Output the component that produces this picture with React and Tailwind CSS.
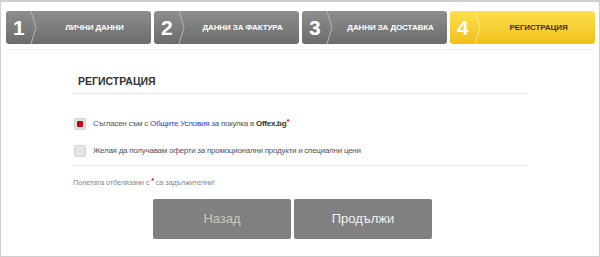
const steps = [
  { n: 1, label: 'ЛИЧНИ ДАННИ' },
  { n: 2, label: 'ДАННИ ЗА ФАКТУРА' },
  { n: 3, label: 'ДАННИ ЗА ДОСТАВКА' },
  { n: 4, label: 'РЕГИСТРАЦИЯ', active: true },
];

const Step = ({ n, label, active }) => (
  <div
    className={`relative flex items-center w-[145px] h-[33px] rounded-[3px] ${
      active
        ? 'bg-gradient-to-b from-[#fde04a] to-[#f0bf17]'
        : 'bg-gradient-to-b from-[#8e8e8e] to-[#6c6c6c]'
    }`}
  >
    <span className="w-[24px] pl-[7px] text-[21px] font-bold text-white leading-none">{n}</span>
    <svg width="8" height="33" viewBox="0 0 8 33" className="shrink-0">
      <polyline
        points="1,0 6,16.5 1,33"
        fill="none"
        stroke={active ? '#fbe98a' : '#b4b4b4'}
        strokeWidth="1"
      />
    </svg>
    <span
      className={`flex-1 text-center text-[8px] font-bold tracking-[-0.1px] ${
        active ? 'text-[#3a3318]' : 'text-white'
      }`}
    >
      {label}
    </span>
  </div>
);

export default function App() {
  return (
    <div className="w-[600px] h-[257px] border border-t-2 border-[#cfcfcf] bg-white font-['Liberation_Sans',Arial,sans-serif]">
      <div className="flex gap-[3px] pl-[5px] pt-[9px]">
        {steps.map((s) => (
          <Step key={s.n} {...s} />
        ))}
      </div>
      <div className="mx-[5px] mt-[5px] h-px bg-[#efefef]" />

      <div className="ml-[72px] w-[455px]">
        <h2 className="pl-[5px] pt-[24px] pb-[5px] text-[10.5px] leading-[14px] font-bold text-[#333]">
          РЕГИСТРАЦИЯ
        </h2>
        <div className="h-px bg-[#e4e4e4]" />

        <div className="pt-[24px] flex items-center gap-[7px] pl-[1px] h-[36px]">
          <span className="w-[12px] h-[12px] rounded-[2px] bg-[#e2e2e2] border border-[#d2d2d2] flex items-center justify-center">
            <span className="w-[6px] h-[6px] rounded-[1px] bg-[#c8001e]" />
          </span>
          <span className="text-[8px] leading-[12px] tracking-[-0.25px] text-[#555]">
            Съгласен съм с <span className="text-[#2f3fcc]">Общите Условия</span> за покупка в{' '}
            <span className="font-bold text-[#333]">Offex.bg</span>
            <span className="text-[#d0021b] font-bold relative -top-[2px]">*</span>
          </span>
        </div>

        <div className="pt-[15px] flex items-center gap-[7px] pl-[1px] h-[27px]">
          <span className="w-[12px] h-[12px] rounded-[2px] bg-[#e4e4e4] border border-[#d6d6d6]" />
          <span className="text-[8px] leading-[12px] tracking-[-0.25px] text-[#555]">
            Желая да получавам оферти за промоционални продукти и специални цени
          </span>
        </div>

        <div className="mt-[8px] h-px bg-[#e4e4e4]" />

        <p className="pt-[12px] text-[7.5px] leading-[10px] tracking-[-0.2px] text-[#8a8a8a]">
          Полетата отбелязани с <span className="text-[#d0021b] font-bold relative -top-[2px]">*</span> са задължителни!
        </p>

        <div className="flex gap-[3px] pl-[80px] pt-[11px]">
          <button className="w-[138px] h-[40px] rounded-[2px] bg-[#808080] text-[13px] text-[#c4ccb9]">
            Назад
          </button>
          <button className="w-[138px] h-[40px] rounded-[2px] bg-[#808080] text-[13px] text-[#f2f2f2]">
            Продължи
          </button>
        </div>
      </div>
    </div>
  );
}
